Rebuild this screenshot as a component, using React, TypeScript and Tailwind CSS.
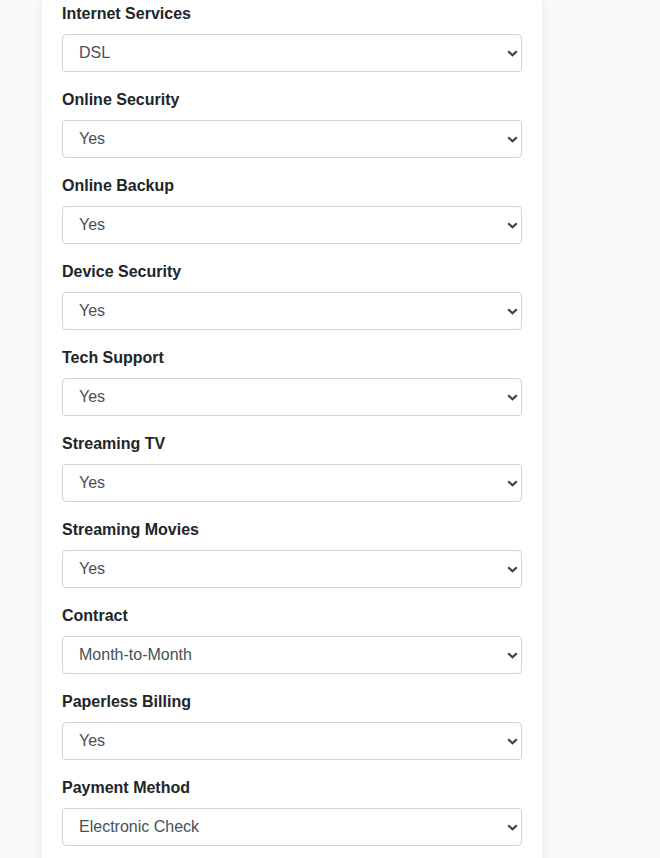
const fields: { label: string; value: string; options: string[] }[] = [
  { label: 'Internet Services', value: 'DSL', options: ['DSL', 'Fiber Optic', 'No'] },
  { label: 'Online Security', value: 'Yes', options: ['Yes', 'No'] },
  { label: 'Online Backup', value: 'Yes', options: ['Yes', 'No'] },
  { label: 'Device Security', value: 'Yes', options: ['Yes', 'No'] },
  { label: 'Tech Support', value: 'Yes', options: ['Yes', 'No'] },
  { label: 'Streaming TV', value: 'Yes', options: ['Yes', 'No'] },
  { label: 'Streaming Movies', value: 'Yes', options: ['Yes', 'No'] },
  { label: 'Contract', value: 'Month-to-Month', options: ['Month-to-Month', 'One Year', 'Two Year'] },
  { label: 'Paperless Billing', value: 'Yes', options: ['Yes', 'No'] },
  {
    label: 'Payment Method',
    value: 'Electronic Check',
    options: ['Electronic Check', 'Mailed Check', 'Bank Transfer', 'Credit Card'],
  },
]

function SelectField({ label, value, options }: { label: string; value: string; options: string[] }) {
  return (
    <div className="mb-4">
      <label className="block mb-2 text-[16px] leading-6 font-bold text-[#212529]">{label}</label>
      <div className="relative">
        <select
          defaultValue={value}
          className="block w-full h-[38px] appearance-none rounded-[4px] border border-[#ced4da] bg-white pl-4 pr-8 text-[16px] text-[#495057] outline-none"
        >
          {options.map((o) => (
            <option key={o}>{o}</option>
          ))}
        </select>
        <svg
          className="pointer-events-none absolute right-[4px] top-[16px]"
          width="11"
          height="7"
          viewBox="0 0 11 7"
          fill="none"
        >
          <path d="M1.2 1.2 5.5 5.3 9.8 1.2" stroke="#3d4247" strokeWidth="2.2" />
        </svg>
      </div>
    </div>
  )
}

export default function App() {
  return (
    <div className="min-h-screen bg-[#f8f9fa] font-['Liberation_Sans',Arial,sans-serif]">
      <div className="ml-[42px] w-[500px] bg-white px-5 pt-[2px] pb-6 shadow-[0_0_10px_rgba(0,0,0,0.06)]">
        {fields.map((f) => (
          <SelectField key={f.label} {...f} />
        ))}
      </div>
    </div>
  )
}
